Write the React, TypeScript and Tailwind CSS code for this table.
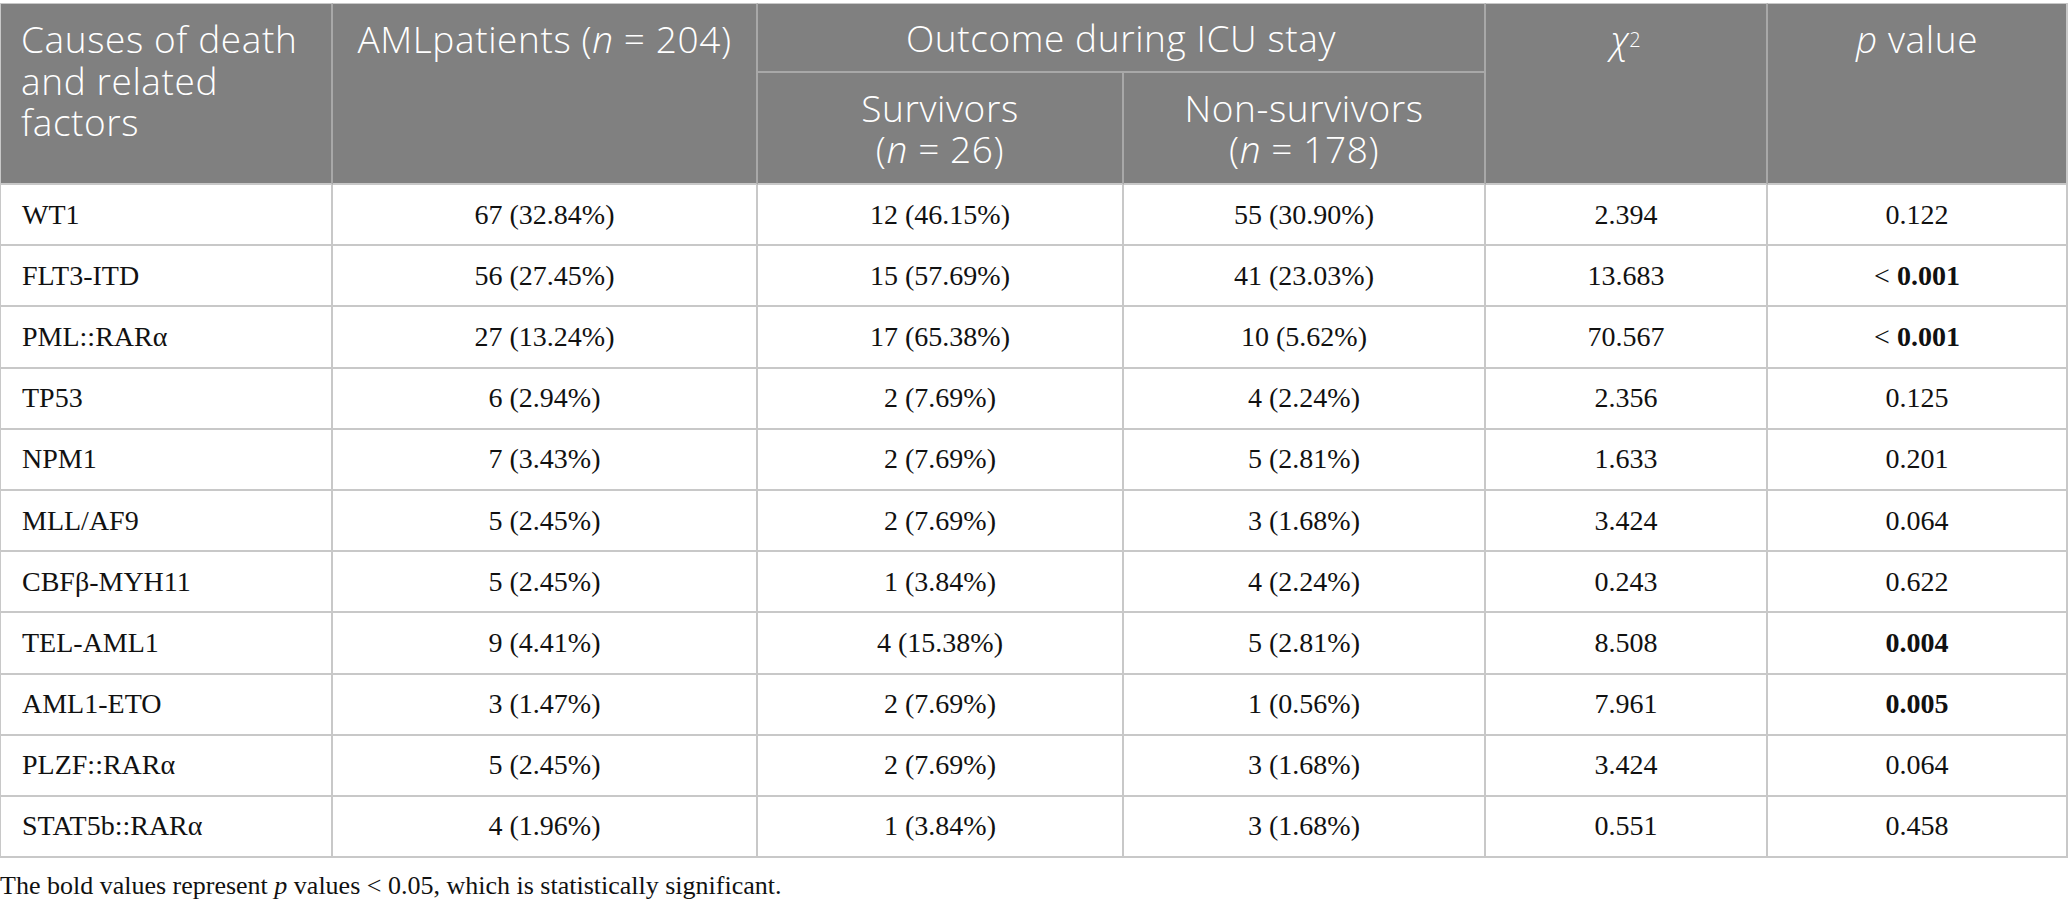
import React from "react";

type Row = {
  name: string;
  aml: string;
  surv: string;
  non: string;
  chi: string;
  p: React.ReactNode;
};

const bold = (v: string, lt = false) => (
  <span>
    {lt ? <span>{"< "}</span> : null}
    <span className="font-bold">{v}</span>
  </span>
);

const rows: Row[] = [
  { name: "WT1", aml: "67 (32.84%)", surv: "12 (46.15%)", non: "55 (30.90%)", chi: "2.394", p: "0.122" },
  { name: "FLT3-ITD", aml: "56 (27.45%)", surv: "15 (57.69%)", non: "41 (23.03%)", chi: "13.683", p: bold("0.001", true) },
  { name: "PML::RARα", aml: "27 (13.24%)", surv: "17 (65.38%)", non: "10 (5.62%)", chi: "70.567", p: bold("0.001", true) },
  { name: "TP53", aml: "6 (2.94%)", surv: "2 (7.69%)", non: "4 (2.24%)", chi: "2.356", p: "0.125" },
  { name: "NPM1", aml: "7 (3.43%)", surv: "2 (7.69%)", non: "5 (2.81%)", chi: "1.633", p: "0.201" },
  { name: "MLL/AF9", aml: "5 (2.45%)", surv: "2 (7.69%)", non: "3 (1.68%)", chi: "3.424", p: "0.064" },
  { name: "CBFβ-MYH11", aml: "5 (2.45%)", surv: "1 (3.84%)", non: "4 (2.24%)", chi: "0.243", p: "0.622" },
  { name: "TEL-AML1", aml: "9 (4.41%)", surv: "4 (15.38%)", non: "5 (2.81%)", chi: "8.508", p: bold("0.004") },
  { name: "AML1-ETO", aml: "3 (1.47%)", surv: "2 (7.69%)", non: "1 (0.56%)", chi: "7.961", p: bold("0.005") },
  { name: "PLZF::RARα", aml: "5 (2.45%)", surv: "2 (7.69%)", non: "3 (1.68%)", chi: "3.424", p: "0.064" },
  { name: "STAT5b::RARα", aml: "4 (1.96%)", surv: "1 (3.84%)", non: "3 (1.68%)", chi: "0.551", p: "0.458" },
];

const headFont = { fontFamily: "'Open Sans', 'Noto Sans', sans-serif" };

export default function App() {
  const th =
    "bg-[#808080] text-white font-light text-[37px] leading-[41.5px] tracking-[0.6px] border-r-2 border-b-2 border-[#a8a8a8] text-center";
  const td =
    "border-r-2 border-b-2 border-[#c8c8c8] text-[28px] text-[#111111] text-center align-middle h-[61.2px] p-0";
  return (
    <div className="w-[2068px] h-[909px] bg-white pt-[3px] overflow-hidden">
      <table
        className="w-[2068px] table-fixed border-separate border-spacing-0"
        style={{ fontFamily: "'Liberation Serif', 'Times New Roman', serif" }}
      >
        <colgroup>
          <col className="w-[333px]" />
          <col className="w-[425px]" />
          <col className="w-[366px]" />
          <col className="w-[362px]" />
          <col className="w-[282px]" />
          <col className="w-[300px]" />
        </colgroup>
        <thead style={headFont}>
          <tr className="h-[70px]">
            <th
              rowSpan={2}
              className={`${th} text-left align-top pl-[20px] pr-2 pt-[14px] border-l border-t border-t-[#c8c8c8] border-l-[#c8c8c8] border-b-[#c8c8c8]`}
            >
              Causes of death and related factors
            </th>
            <th rowSpan={2} className={`${th} align-top pt-[14px] border-t border-t-[#c8c8c8] border-b-[#c8c8c8]`}>
              AMLpatients (<span className="italic">n</span> = 204)
            </th>
            <th colSpan={2} className={`${th} align-middle border-t border-t-[#c8c8c8]`}>
              Outcome during ICU stay
            </th>
            <th rowSpan={2} className={`${th} align-top pt-[14px] border-t border-t-[#c8c8c8] border-b-[#c8c8c8]`}>
              <span className="italic">χ</span>
              <sup className="text-[20px] relative top-[-6px]">2</sup>
            </th>
            <th
              rowSpan={2}
              className={`${th} align-top pt-[14px] border-t border-t-[#c8c8c8] border-b-[#c8c8c8] border-r border-r-[#c8c8c8]`}
            >
              <span className="italic">p</span> value
            </th>
          </tr>
          <tr className="h-[112px]">
            <th className={`${th} align-middle border-b-[#c8c8c8]`}>
              Survivors
              <br />(<span className="italic">n</span> = 26)
            </th>
            <th className={`${th} align-middle border-b-[#c8c8c8]`}>
              Non-survivors
              <br />(<span className="italic">n</span> = 178)
            </th>
          </tr>
        </thead>
        <tbody>
          {rows.map((r) => (
            <tr key={r.name}>
              <td className={`${td} text-left pl-[21px] border-l border-l-[#c8c8c8]`}>{r.name}</td>
              <td className={td}>{r.aml}</td>
              <td className={td}>{r.surv}</td>
              <td className={td}>{r.non}</td>
              <td className={td}>{r.chi}</td>
              <td className={`${td} border-r border-r-[#c8c8c8]`}>{r.p}</td>
            </tr>
          ))}
        </tbody>
      </table>
      <p
        className="mt-[13px] text-[26px] leading-[30px] text-[#111111]"
        style={{ fontFamily: "'Liberation Serif', 'Times New Roman', serif" }}
      >
        The bold values represent <span className="italic">p</span> values &lt; 0.05, which is statistically
        significant.
      </p>
    </div>
  );
}
